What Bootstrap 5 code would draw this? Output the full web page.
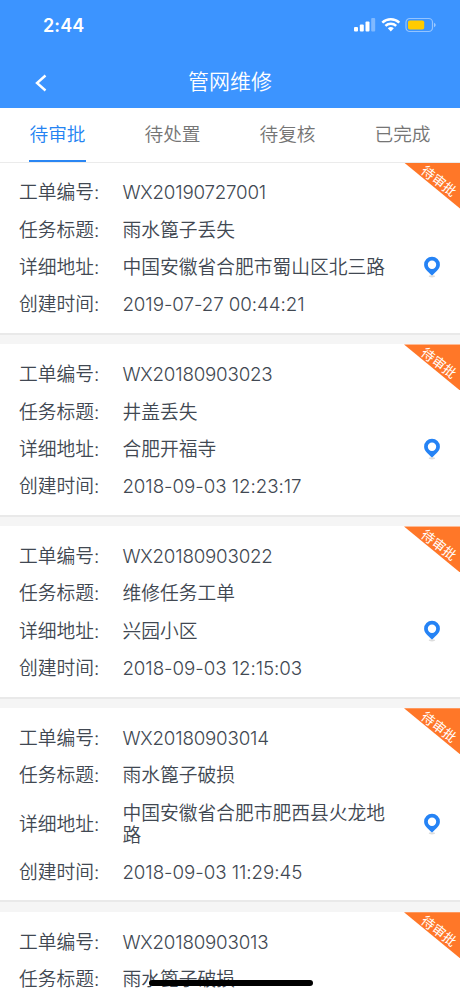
<!DOCTYPE html>
<html lang="zh-CN">
<head>
<meta charset="utf-8">
<meta name="viewport" content="width=device-width, initial-scale=1">
<title>管网维修</title>
<link href="https://cdn.jsdelivr.net/npm/bootstrap@5.3.0/dist/css/bootstrap.min.css" rel="stylesheet">
<style>
body{font-family:Inter,"Noto Sans CJK SC",sans-serif;color:#414852;background:#f5f5f5;height:996px}
.app{height:996px}
.topbar{background:#3c94ff;height:108px}
.statusbar{height:50px;padding:0 24px 0 43px}
.clock{font-size:18px;font-weight:600;letter-spacing:.1px}
.titlebar{height:58px}
.page-title{font-size:21px;line-height:30px;padding-top:6px;font-weight:350}
.back{left:34px;top:23px}
.tabs{height:54.5px;border-bottom:1px solid #ebebeb}
.tabs .nav-link{font-size:18.7px;font-weight:350;line-height:28px;color:#757575;padding:13px 0 10px;border-bottom:2px solid transparent;border-radius:0;height:53.5px}
.tabs .nav-link.active{color:#2483f2;border-color:#2a86f3}
.order{padding:19.9px 0 16.7px 19px;border-bottom:2px solid #e9e9e9;margin-bottom:9.8px}
.fields{gap:15.2px}
.field{font-size:18.75px;line-height:22px;font-weight:350}
.key{width:103.4px}
.value{width:270px}
.num{letter-spacing:-.2px}
.date{letter-spacing:-.06px}
.pin{margin-left:30.6px;margin-top:-1px}
.ribbon{width:56px;height:46px;background:#ff7728;clip-path:polygon(0 0,100% 0,100% 100%)}
.ribbon span{left:34.5px;top:18.3px;font-size:13.4px;line-height:16px;transform:translate(-50%,-50%) rotate(38deg)}
.home{width:164px;height:6px;left:148.5px;top:979.7px}
.last-order{padding-bottom:40px}
</style>
<script src="https://cdn.jsdelivr.net/npm/bootstrap@5.3.0/dist/js/bootstrap.bundle.min.js"></script>
</head>
<body>
<svg class="d-none"><symbol id="pin" viewBox="0 0 18 23"><ellipse cx="9" cy="20.3" rx="3.2" ry="1.1" fill="#ddd"/><path fill="#2583f5" fill-rule="evenodd" d="M9 .8A7.900 7.900 0 0 0 1.100 8.700C1.100 13 5 15.500 9 19.600 13 15.500 16.900 13 16.900 8.700A7.900 7.900 0 0 0 9 .8Zm0 3.700a4.200 4.200 0 1 1 0 8.400 4.200 4.200 0 0 1 0-8.400Z"/></symbol></svg>
<div class="app position-relative overflow-hidden">
<header class="topbar text-white">
  <div class="statusbar d-flex justify-content-between align-items-center">
    <span class="clock">2:44</span>
    <svg width="84" height="18" viewBox="0 0 84 18" fill="#fff">
      <rect x="2" y="11" width="4" height="4.500" rx="1"/><rect x="7.800" y="8.500" width="4" height="7" rx="1"/><rect x="13.500" y="5.500" width="4" height="10" rx="1"/><rect x="19.200" y="2" width="4" height="13.500" rx="1" opacity=".35"/>
      <g transform="translate(.8 0)"><g fill="none" stroke="#fff" stroke-width="2.500"><path d="M29.500 6.700a12.300 12.300 0 0 1 17 0"/><path d="M32.600 9.900a7.900 7.900 0 0 1 10.800 0"/></g><path d="M35 12.300a4.400 4.400 0 0 1 6 0l-3 3.200Z"/></g>
      <rect x="54" y="2.500" width="26.500" height="13" rx="3.700" fill="none" stroke="#fff" stroke-opacity=".45" stroke-width="1.200"/><rect x="56" y="4.500" width="16.200" height="9" rx="1.800" fill="#ffcb00"/><path d="M82 6.700v4.600q1.700-.7 1.700-2.300T82 6.700Z" opacity=".5"/>
    </svg>
  </div>
  <div class="titlebar position-relative d-flex justify-content-center align-items-center">
    <svg class="back position-absolute" width="14" height="20" viewBox="0 0 14 20" fill="none" stroke="#fff" stroke-width="2.400"><path d="M11.500 2.500 3 10l8.500 7.500"/></svg>
    <span class="page-title">管网维修</span>
  </div>
</header>
<nav class="tabs nav nav-fill bg-white d-flex">
  <div class="col-3 d-flex justify-content-center"><a class="nav-link active" href="#">待审批</a></div>
  <div class="col-3 d-flex justify-content-center"><a class="nav-link" href="#">待处置</a></div>
  <div class="col-3 d-flex justify-content-center"><a class="nav-link" href="#">待复核</a></div>
  <div class="col-3 d-flex justify-content-center"><a class="nav-link" href="#">已完成</a></div>
</nav>
<main>
  <article class="order bg-white position-relative">
    <div class="ribbon position-absolute top-0 end-0 text-white"><span class="position-absolute text-nowrap">待审批</span></div>
    <div class="fields d-flex flex-column">
      <div class="field d-flex align-items-center"><span class="key">工单编号:</span><span class="value num">WX20190727001</span></div>
      <div class="field d-flex align-items-center"><span class="key">任务标题:</span><span class="value">雨水篦子丢失</span></div>
      <div class="field d-flex align-items-center"><span class="key">详细地址:</span><span class="value">中国安徽省合肥市蜀山区北三路</span><svg class="pin" width="18" height="23"><use href="#pin"/></svg></div>
      <div class="field d-flex align-items-center"><span class="key">创建时间:</span><span class="value num date">2019-07-27 00:44:21</span></div>
    </div>
  </article>
  <article class="order bg-white position-relative">
    <div class="ribbon position-absolute top-0 end-0 text-white"><span class="position-absolute text-nowrap">待审批</span></div>
    <div class="fields d-flex flex-column">
      <div class="field d-flex align-items-center"><span class="key">工单编号:</span><span class="value num">WX20180903023</span></div>
      <div class="field d-flex align-items-center"><span class="key">任务标题:</span><span class="value">井盖丢失</span></div>
      <div class="field d-flex align-items-center"><span class="key">详细地址:</span><span class="value">合肥开福寺</span><svg class="pin" width="18" height="23"><use href="#pin"/></svg></div>
      <div class="field d-flex align-items-center"><span class="key">创建时间:</span><span class="value num date">2018-09-03 12:23:17</span></div>
    </div>
  </article>
  <article class="order bg-white position-relative">
    <div class="ribbon position-absolute top-0 end-0 text-white"><span class="position-absolute text-nowrap">待审批</span></div>
    <div class="fields d-flex flex-column">
      <div class="field d-flex align-items-center"><span class="key">工单编号:</span><span class="value num">WX20180903022</span></div>
      <div class="field d-flex align-items-center"><span class="key">任务标题:</span><span class="value">维修任务工单</span></div>
      <div class="field d-flex align-items-center"><span class="key">详细地址:</span><span class="value">兴园小区</span><svg class="pin" width="18" height="23"><use href="#pin"/></svg></div>
      <div class="field d-flex align-items-center"><span class="key">创建时间:</span><span class="value num date">2018-09-03 12:15:03</span></div>
    </div>
  </article>
  <article class="order bg-white position-relative">
    <div class="ribbon position-absolute top-0 end-0 text-white"><span class="position-absolute text-nowrap">待审批</span></div>
    <div class="fields d-flex flex-column">
      <div class="field d-flex align-items-center"><span class="key">工单编号:</span><span class="value num">WX20180903014</span></div>
      <div class="field d-flex align-items-center"><span class="key">任务标题:</span><span class="value">雨水篦子破损</span></div>
      <div class="field d-flex align-items-center"><span class="key">详细地址:</span><span class="value">中国安徽省合肥市肥西县火龙地路</span><svg class="pin" width="18" height="23"><use href="#pin"/></svg></div>
      <div class="field d-flex align-items-center"><span class="key">创建时间:</span><span class="value num date">2018-09-03 11:29:45</span></div>
    </div>
  </article>
  <article class="order last-order bg-white position-relative">
    <div class="ribbon position-absolute top-0 end-0 text-white"><span class="position-absolute text-nowrap">待审批</span></div>
    <div class="fields d-flex flex-column">
      <div class="field d-flex align-items-center"><span class="key">工单编号:</span><span class="value num">WX20180903013</span></div>
      <div class="field d-flex align-items-center"><span class="key">任务标题:</span><span class="value">雨水篦子破损</span></div>
    </div>
  </article>
</main>
<div class="home position-absolute bg-black rounded-pill"></div>
</div>
</body>
</html>
